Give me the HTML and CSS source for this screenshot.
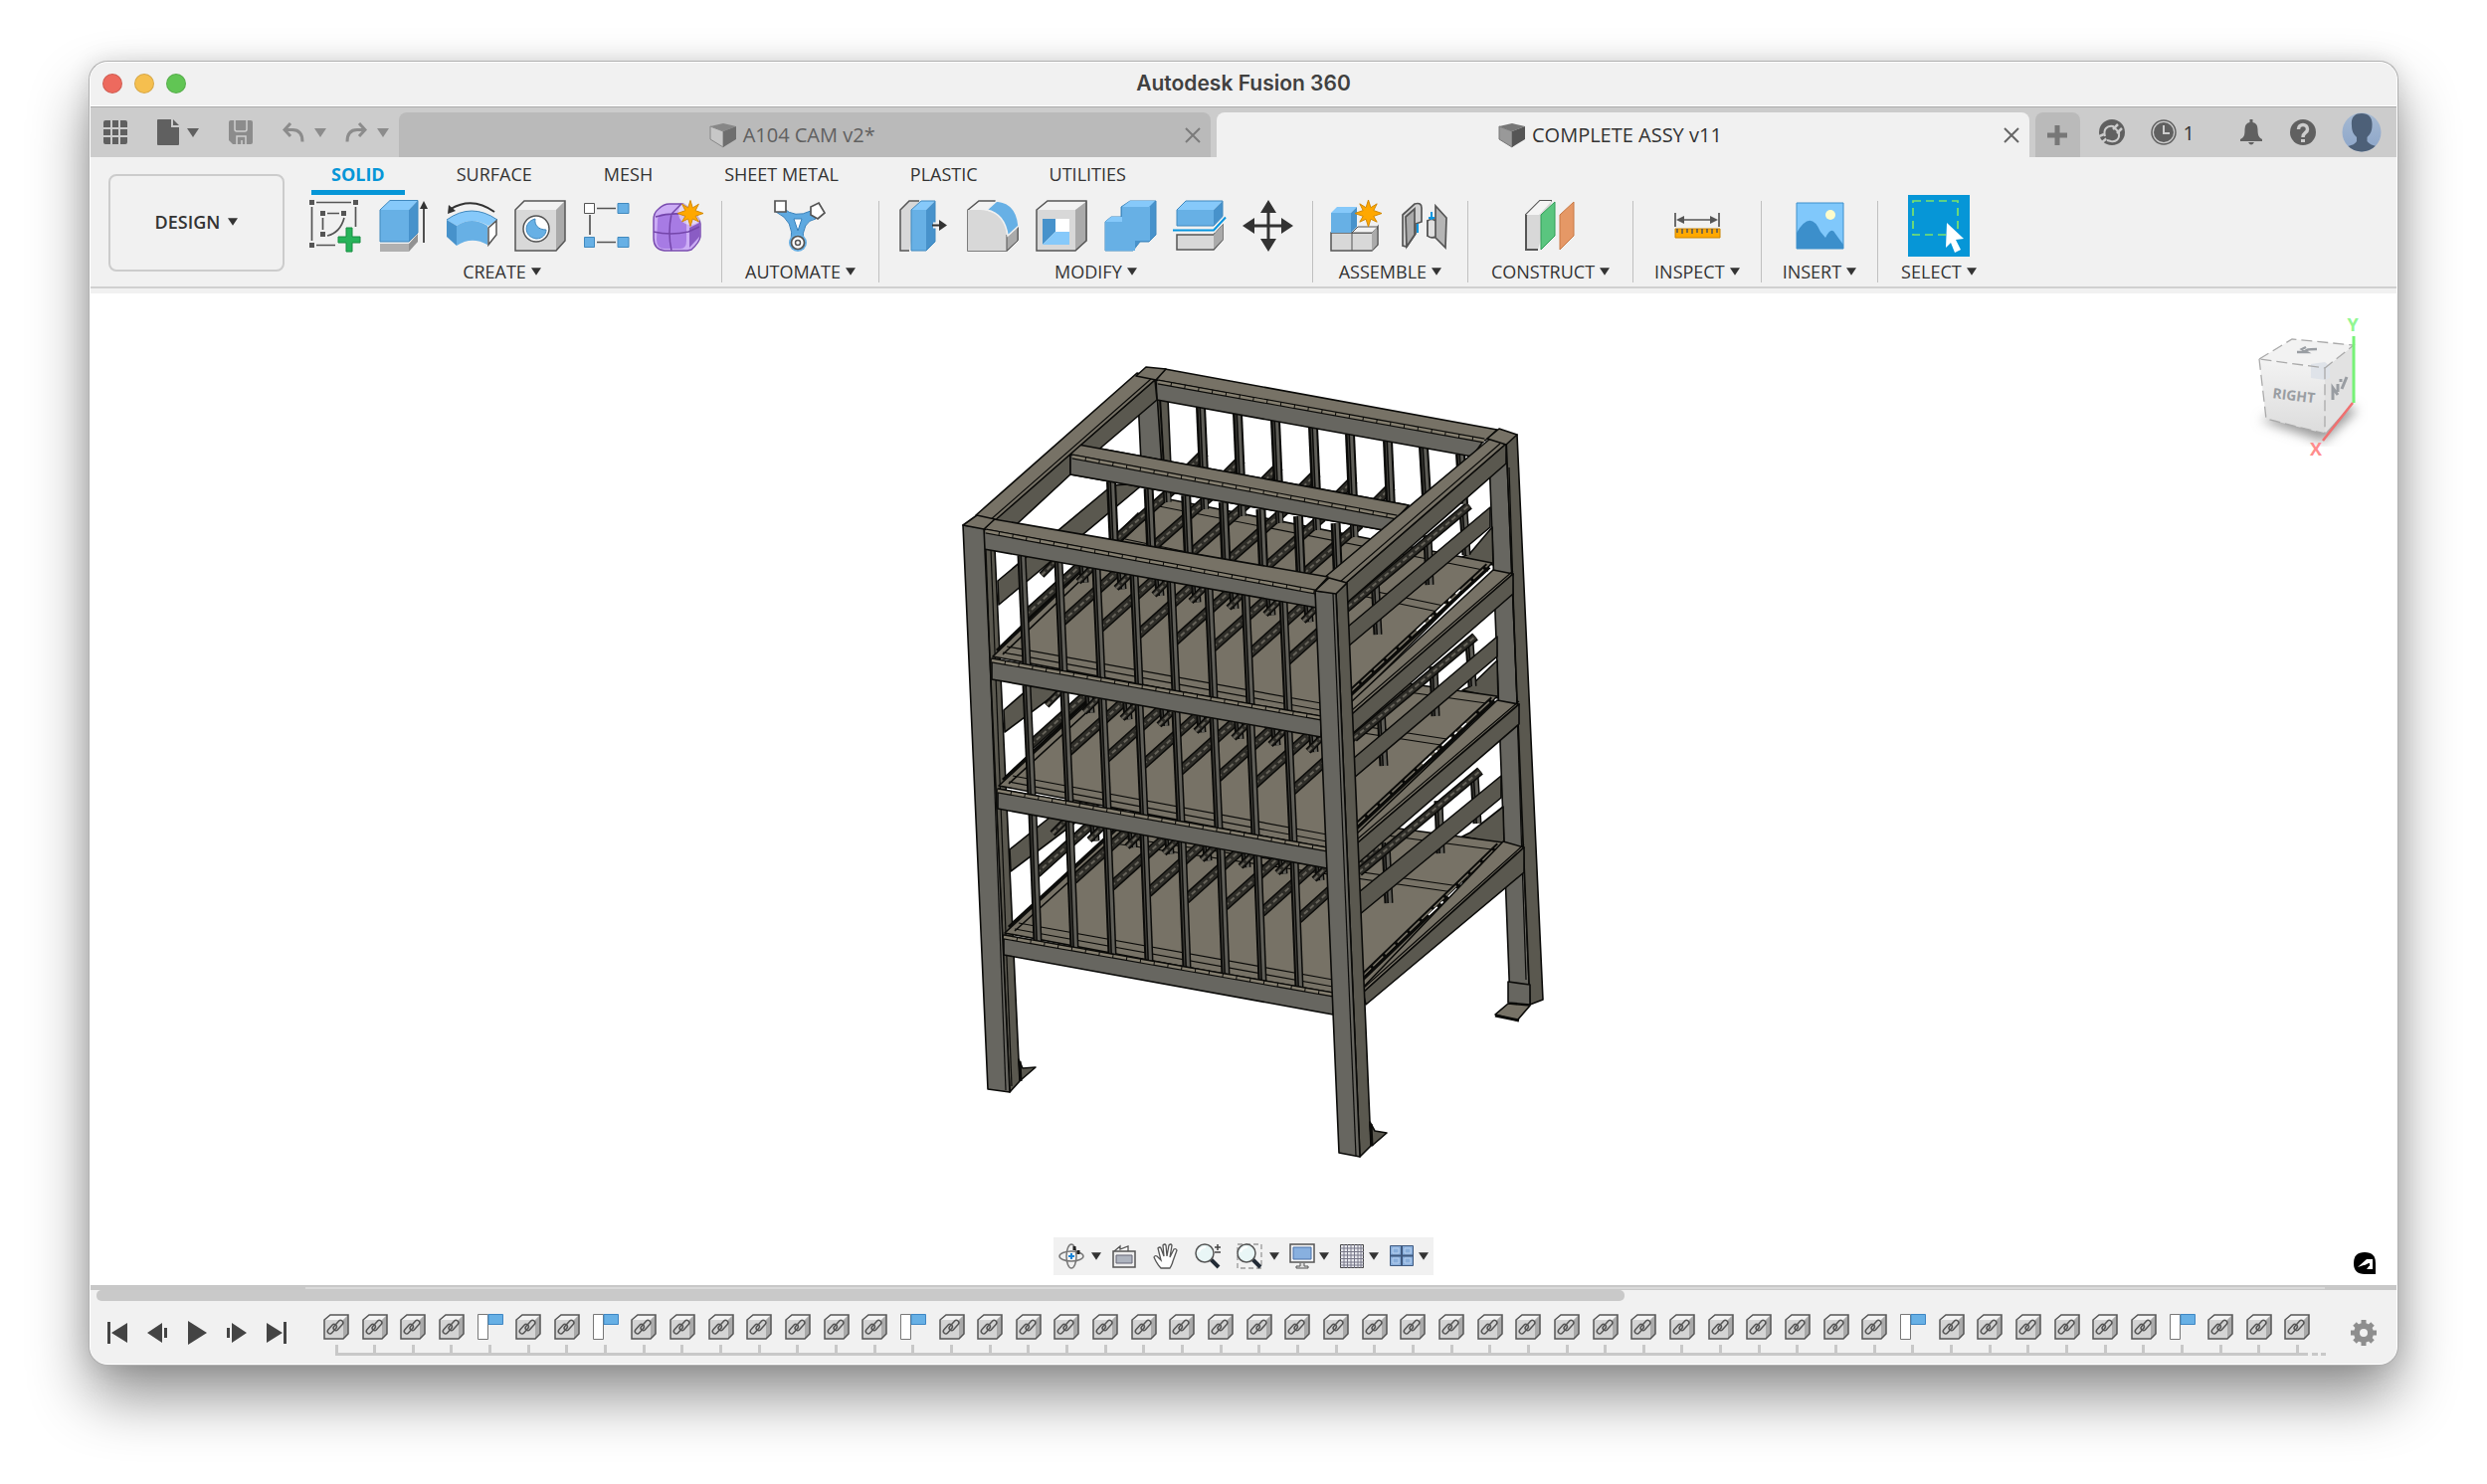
FILE: index.html
```html
<!DOCTYPE html>
<html lang="en">
<head>
<meta charset="utf-8">
<title>Autodesk Fusion 360</title>
<link rel="stylesheet" href="styles.css">
<script src="app.js" defer></script>
</head>
<body>
<svg class="defs" aria-hidden="true">
  <symbol id="caret" viewBox="0 0 12 9"><path d="M0 0h12L6 9z" fill="currentColor"/></symbol>
  <symbol id="star" viewBox="-14 -14 28 28"><path d="M0-14L2.5-6 9-10 5.500-3 14 0 5.500 3 9 9 2.500 6 0 14-2.500 6-9 9-5.500 3-14 0-5.500-3-9-10-2.500-6z" fill="#ffa800" stroke="#d08600"/></symbol>
  <symbol id="doc" viewBox="0 0 28 26"><path d="M1 4L14 1l13 3-13 5z" fill="#777"/><path d="M1 4l13 5v16L1 17z" fill="currentColor" stroke="#777"/><path d="M14 9l13-5v13l-13 8z" fill="#555"/></symbol>
  <symbol id="close" viewBox="0 0 16 16"><path d="M1 1l14 14M15 1L1 15" stroke="#666" stroke-width="2"/></symbol>
  <symbol id="link" viewBox="0 0 26 26"><path d="M1 6l6-5h18v19l-5 5H1z" fill="#d4d4d4"/><path d="M1 6l6-5h18l-5 5z" fill="#f4f4f4"/><path d="M20 6l5-5v19l-5 5z" fill="#aaa"/><path d="M1 6l6-5h18v19l-5 5H1z" fill="none" stroke="#555" stroke-width="1.500"/><g fill="none" stroke="#555" stroke-width="1.500"><rect x="-2.500" y="-6" width="5" height="11" rx="2.500" transform="translate(8.500 15.500) rotate(42)"/><rect x="-2.500" y="-6" width="5" height="12" rx="2.500" transform="translate(15 11.500) rotate(42)"/></g></symbol>
  <symbol id="flag" viewBox="0 0 26 26"><path d="M.5.5h10v25H.5z" fill="#fff" stroke="#777"/><path d="M11 .5h14.500v10H11z" fill="#67b0e5" stroke="#3f87c4"/></symbol>
  <symbol id="lens" viewBox="0 0 26 26"><path d="M16 16l8 8" stroke="#222b36" stroke-width="4"/><circle cx="10" cy="10" r="9" fill="#e9f6f6" stroke="#555" stroke-width="1.500"/><path d="M4 9c1-4 4-5 7-5" stroke="#fff" stroke-width="2" fill="none"/></symbol>
</svg>

<main class="window">
  <header class="titlebar">
    <div class="lights"><button class="light red" aria-label="Close window"></button><button class="light yellow" aria-label="Minimize"></button><button class="light green" aria-label="Zoom window"></button></div>
    <h1>Autodesk Fusion 360</h1>
  </header>

  <div class="appbar">
    <div class="quick">
      <button aria-label="Data panel"><svg width="24" height="24" viewBox="0 0 24 24" fill="#606060"><path d="M0 2q0-2 2-2h5v7H0zM9 0h6v7H9zM17 0h5q2 0 2 2v5h-7zM0 9h7v6H0zM9 9h6v6H9zM17 9h7v6h-7zM0 17h7v7H2q-2 0-2-2zM9 17h6v7H9zM17 17h7v5q0 2-2 2h-5z"/></svg></button>
      <button aria-label="File"><svg width="22" height="26" viewBox="0 0 22 26"><path d="M1 0h13v8h8v17q0 1-1 1H1q-1 0-1-1V1q0-1 1-1zM16 0l6 6h-6z" fill="#606060"/></svg><svg class="c file" width="12" height="9"><use href="#caret"/></svg></button>
      <button aria-label="Save"><svg width="24" height="24" viewBox="0 0 24 24"><path d="M2 0h20q2 0 2 2v20q0 2-2 2H4l-4-4V2q0-2 2-2z" fill="#8c8c8c"/><path d="M6 0v9q0 2 2 2h8q2 0 2-2V0M8 24v-8h9v8M13 24v-4" stroke="#d0d0d0" stroke-width="1.500" fill="none"/></svg></button>
      <div class="history">
        <button aria-label="Undo"><svg width="22" height="20" viewBox="0 0 22 20" fill="none" stroke="#8c8c8c" stroke-width="3"><path d="M8 1L2 7.500 8 14M2 7.500h8q10 0 10 12"/></svg><svg class="c" width="12" height="9"><use href="#caret"/></svg></button>
        <button aria-label="Redo"><svg width="22" height="20" viewBox="0 0 22 20" fill="none" stroke="#8c8c8c" stroke-width="3"><path d="M14 1l6 6.500L14 14M20 7.500h-8q-10 0-10 12"/></svg><svg class="c" width="12" height="9"><use href="#caret"/></svg></button>
      </div>
    </div>
    <div class="docs">
      <div class="doc inactive"><span><svg width="28" height="26"><use href="#doc"/></svg>A104 CAM v2*</span><button aria-label="Close A104 CAM"><svg width="16" height="16"><use href="#close"/></svg></button></div>
      <div class="doc active"><span><svg width="28" height="26"><use href="#doc"/></svg>COMPLETE ASSY v11</span><button aria-label="Close COMPLETE ASSY"><svg width="16" height="16"><use href="#close"/></svg></button></div>
    </div>
    <button class="new" aria-label="New design"><svg width="20" height="20" viewBox="0 0 20 20"><path d="M10 0v20M0 10h20" stroke="#777" stroke-width="5"/></svg></button>
    <div class="account">
      <button aria-label="Extensions"><svg width="26" height="26" viewBox="0 0 26 26"><circle cx="13" cy="13" r="13" fill="#606060"/><path d="M0 17l5-2M3 23l5-4" stroke="#ccc" stroke-width="2.500"/><path d="M6 17c-2-7 2-11 8-10l6 6c1 7-3 10-8 9l-4-1" fill="#606060" stroke="#ccc" stroke-width="2"/><path d="M14 10l5-5M18 14l5-5" stroke="#ccc" stroke-width="2.500"/></svg></button>
      <button class="jobs" aria-label="Job status"><svg width="26" height="26" viewBox="0 0 26 26"><circle cx="13" cy="13" r="12" fill="none" stroke="#606060" stroke-width="1.500"/><circle cx="13" cy="13" r="10" fill="#606060"/><path d="M13 6v8h6" fill="none" stroke="#ccc" stroke-width="2"/></svg>1</button>
      <button class="bell" aria-label="Notifications"><svg width="22" height="26" viewBox="0 0 22 26"><path d="M9.500 3V0h3v3q5 1 5 7c0 6 1 8 4.500 10v2H0v-2c4-2 4.500-4 4.500-10q0-6 5-7zM8 23h6q-3 5-6 0z" fill="#606060"/></svg></button>
      <button aria-label="Help"><svg width="26" height="26" viewBox="0 0 26 26"><circle cx="13" cy="13" r="13" fill="#606060"/><path d="M8.500 10c0-6 9-6 9 0 0 4-4.500 3-4.500 8" fill="none" stroke="#ccc" stroke-width="3.500"/><path d="M11 20h4v3h-4z" fill="#ccc"/></svg></button>
      <button aria-label="Profile"><svg width="40" height="40" viewBox="0 0 40 40"><defs><linearGradient id="av" x2="0" y2="1"><stop stop-color="#a5b9d2"/><stop offset="1" stop-color="#8ca5c9"/></linearGradient><clipPath id="ac"><circle cx="20" cy="20" r="19.500"/></clipPath></defs><circle cx="20" cy="20" r="19.500" fill="url(#av)"/><path clip-path="url(#ac)" d="M20 1c7 0 11 4 10.500 12 0 6-2 9-5 12v4c3 4 7 4 11 6v8H4v-8c4-2 9-2 11-6v-4c-3-3-5-6-5-12C9 5 13 1 20 1z" fill="#4d6078"/></svg></button>
    </div>
  </div>

  <section class="ribbon">
    <button class="workspace">DESIGN<svg width="10" height="8"><use href="#caret"/></svg></button>
    <div class="tools">
      <nav class="tabs"><button class="on">SOLID</button><button>SURFACE</button><button>MESH</button><button>SHEET METAL</button><button>PLASTIC</button><button>UTILITIES</button></nav>
      <div class="groups">
        <div class="group create">
          <div class="icons">
            <button aria-label="Create sketch"><svg viewBox="0 0 52 52"><g fill="#555"><path d="M1 0h5v5H1zM45 0h5v5h-5zM1 43h5v5H1zM12 11h5v5h-5zM33 11h5v5h-5zM12 32h5v5h-5z"/></g><path d="M8 2.500h35M3.500 7v34M47.500 7v20M8 45.500h19M19 13.500h12M14.500 18v12M36 18Q32 33 19 36" stroke="#555" stroke-width="1.700" fill="none"/><path d="M38 28h6v9h8v6h-8v9h-6v-9h-8v-6h8z" fill="#27b35a" stroke="#168d40"/></svg></button>
            <button aria-label="Extrude"><svg viewBox="0 0 52 52"><path d="M3 44h29v8H3z" fill="#b0b0b0"/><path d="M32 44l9-10v8l-9 10z" fill="#929292"/><path d="M3 10h29v32H3z" fill="#67b0e5"/><path d="M3 10l10-9.500h28L32 10z" fill="#86c9fa"/><path d="M32 10l9-9.500V33l-9 9z" fill="#4792cb"/><path d="M3 10l10-9.500h28V33l-9 9H3z" fill="none" stroke="#4189be"/><path d="M47 5v38" stroke="#333" stroke-width="1.700"/><path d="M43 9l4-8 4 8z" fill="#333"/></svg></button>
            <button aria-label="Revolve"><svg viewBox="0 0 52 52"><path d="M49 12Q27-4 5 9" fill="none" stroke="#333" stroke-width="2"/><path d="M2 14l1-9 7 6z" fill="#333"/><path d="M1 20Q26 2 52 20l-9 6Q26 16 11 26z" fill="#86c9fa"/><path d="M11 26q15-10 31 0v19Q26 36 11 46z" fill="#67b0e5"/><path d="M1 20l10 6v20L1 37z" fill="#4792cb"/><path d="M1 20Q26 2 52 20" fill="none" stroke="#4189be"/><path d="M43 28l8-7v14l-8 10z" fill="#fff" stroke="#555" stroke-width="1.500"/></svg></button>
            <button aria-label="Hole"><svg viewBox="0 0 52 52"><path d="M1 10l9-9h41v40L42 51H1z" fill="#d8d8d8"/><path d="M1 10l9-9h41l-9 9z" fill="#f2f2f2"/><path d="M42 10l9-9v40L42 51z" fill="#aaa"/><path d="M1 10l9-9h41v40L42 51H1z" fill="none" stroke="#555" stroke-width="1.500"/><circle cx="22" cy="29" r="13" fill="#fff" stroke="#555" stroke-width="1.500"/><path d="M21 19c-12 3-12 18 1 20 7 0 10-5 10-9-8 0-12-5-11-11z" fill="#67b0e5" stroke="#4189be"/></svg></button>
            <button aria-label="Pattern"><svg viewBox="0 0 52 52"><path d="M14 8.500h19M14 42.500h19M7 15v20" stroke="#555" stroke-width="1.700"/><path d="M1.500 3.500h10v10h-10z" fill="#fff" stroke="#555"/><path d="M35 3.500h11v10H35zM1.500 37.500h10v10h-10zM35 37.500h11v10H35z" fill="#67b0e5" stroke="#4189be"/></svg></button>
            <button aria-label="Create form"><svg viewBox="0 0 52 52"><path d="M2 20Q2 13 7 9q5-5 11-5h14q16 10 17 20v13q-1 6-9 13l-4 1H13Q2 50 2 38z" fill="#ccadf5" stroke="#7a4db0" stroke-width="1.500"/><path d="M6 22q0-8 5-8h18q6 0 6 7v20q0 8-6 8H13q-8 0-8-9z" fill="#a77be4"/><path d="M38 28l10-5v14l-10 11z" fill="#8a5cc4"/><path d="M2 32q17 4 35 0l11-5M20 51q-4-18 0-37L30 4M4 17q16-5 33-2" stroke="#7446aa" stroke-width="1.500" fill="none"/><circle cx="39" cy="13" r="12" fill="#f1f1f1" opacity=".6"/><use href="#star" x="26" y="0" width="26" height="27"/></svg></button>
          </div>
          <button class="label">CREATE<svg width="10" height="8"><use href="#caret"/></svg></button>
        </div>
        <span class="sep"></span>
        <div class="group">
          <div class="icons"><button aria-label="Automate"><svg viewBox="0 0 52 52"><path d="M9 8q12 11 28 3l5 8q-14 2-13 24l-12-1Q21 21 2 12z" fill="#5ea9e0" stroke="#3881bb"/><path d="M20 19h8l-4 12z" fill="#fff" stroke="#3881bb"/><path d="M1 1h11v11H1z" fill="#fff" stroke="#555" stroke-width="1.700"/><path d="M45 3l6 10-7 6-7-4V7z" fill="#fff" stroke="#555" stroke-width="1.700"/><circle cx="24" cy="43" r="9" fill="#67b0e5"/><circle cx="24" cy="43" r="6.500" fill="#fff" stroke="#555" stroke-width="1.700"/><circle cx="24" cy="43" r="2.500" fill="none" stroke="#555" stroke-width="1.500"/></svg></button></div>
          <button class="label">AUTOMATE<svg width="10" height="8"><use href="#caret"/></svg></button>
        </div>
        <span class="sep"></span>
        <div class="group">
          <div class="icons">
            <button aria-label="Press pull"><svg viewBox="0 0 52 52"><path d="M11 51H2V10l9-9h10" fill="#d8d8d8" stroke="#555" stroke-width="1.500"/><path d="M13 10h15v41H13z" fill="#67b0e5"/><path d="M13 10l10-9h14l-9 9z" fill="#86c9fa"/><path d="M28 10l9-9v41l-9 9z" fill="#4792cb"/><path d="M13 10l10-9h14v41l-9 9H13z" fill="none" stroke="#4189be"/><path d="M35 25.500h10" stroke="#f1f1f1" stroke-width="6"/><path d="M34 25.500h9" stroke="#333" stroke-width="2"/><path d="M41 20l8 5.500-8 5.500z" fill="#333"/></svg></button>
            <button aria-label="Fillet"><svg viewBox="0 0 52 52"><path d="M1 10l11-9h16l23 26v13L40 51H1z" fill="#f2f2f2" stroke="#555" stroke-width="1.500"/><path d="M1 10h13q26 2 26 27v14H1z" fill="#d8d8d8"/><path d="M40 35l11-10v16L40 51z" fill="#aaa" stroke="#555"/><path d="M20 10l10-9q20 2 22 25L41 36Q38 14 20 10z" fill="#67b0e5" stroke="#f1f1f1" stroke-width="1.500"/></svg></button>
            <button aria-label="Shell"><svg viewBox="0 0 52 52"><path d="M1 10l11-9h40v40L40 51H1z" fill="#d8d8d8"/><path d="M1 10l11-9h40l-12 9z" fill="#f2f2f2"/><path d="M40 10L52 1v40L40 51z" fill="#aaa"/><path d="M1 10l11-9h39v40L40 51H1z" fill="none" stroke="#555" stroke-width="1.500"/><path d="M7 19h27v26H7z" fill="#fff"/><path d="M7 19h13v13L7 45z" fill="#4792cb"/><path d="M20 32h14v13H7z" fill="#86c9fa"/></svg></button>
            <button aria-label="Combine"><svg viewBox="0 0 52 52"><path d="M1 22l6-5h10V7l9-6h26v34l-7 7h-9l-7 9H1z" fill="#4792cb" stroke="#4189be"/><path d="M1 22h17V7h28v34H31v10H1z" fill="#67b0e5"/><path d="M18 7l8-6h25l-6 6zM1 22l6-5h11v5z" fill="#86c9fa"/></svg></button>
            <button aria-label="Split body"><svg viewBox="0 0 52 52"><path d="M4 10h37v16H4z" fill="#67b0e5"/><path d="M4 10l9-9h37l-9 9z" fill="#86c9fa"/><path d="M41 10l9-9v17l-9 8z" fill="#4792cb"/><path d="M4 10l9-9h37v17l-9 8H4z" fill="none" stroke="#4189be"/><path d="M4 35h37l9-10v15l-9 10H4z" fill="#d8d8d8" stroke="#555" stroke-width="1.500"/><path d="M41 35l9-10v15l-9 9z" fill="#aaa"/><path d="M0 30.500h41l12-13" fill="none" stroke="#f1f1f1" stroke-width="5"/><path d="M0 30.500h41l12-13" fill="none" stroke="#0696e0" stroke-width="2"/></svg></button>
            <button aria-label="Move"><svg viewBox="0 0 52 52"><path d="M27 8v36M8 26h38" stroke="#333" stroke-width="3"/><path d="M27 0l8 13H19zM27 52l8-13H19zM1 26l12-8v16zM52 26l-12-8v16z" fill="#333"/></svg></button>
          </div>
          <button class="label">MODIFY<svg width="10" height="8"><use href="#caret"/></svg></button>
        </div>
        <span class="sep"></span>
        <div class="group tight">
          <div class="icons">
            <button aria-label="New component"><svg viewBox="0 0 52 52"><path d="M1 33h43l4-6v18l-6 6H1z" fill="#d8d8d8" stroke="#555" stroke-width="1.500"/><path d="M22 33l6-6h20l-6 6zv18" fill="#f2f2f2" stroke="#555"/><path d="M42 33l5-6v18l-5 6z" fill="#aaa"/><path d="M1 13h20v20H1z" fill="#67b0e5"/><path d="M1 13l6-6h20l-6 6z" fill="#86c9fa"/><path d="M21 13l6-6v20l-6 6z" fill="#4792cb"/><circle cx="38" cy="13" r="11" fill="#f1f1f1"/><use href="#star" x="25" y="0" width="27" height="27"/></svg></button>
            <button aria-label="Joint"><svg viewBox="0 0 52 52"><g stroke="#555" stroke-width="1.700"><path d="M4 15l12-11q7-2 7 4v14l-6 2v10L8 47l-4-1z" fill="#d0d0d0"/><path d="M7 17l9-8v26L8 47z" fill="#aaa"/><path d="M48 18L37 6v14l-8 1v15l8 2 10 10z" fill="#b5b5b5"/><path d="M29 21q4-3 8 0v16q-5 2-8-1z" fill="#e0e0e0"/></g><path d="M19 24v9M33 12v8M30 18h6" stroke="#0696e0" stroke-width="2"/></svg></button>
          </div>
          <button class="label">ASSEMBLE<svg width="10" height="8"><use href="#caret"/></svg></button>
        </div>
        <span class="sep"></span>
        <div class="group">
          <div class="icons"><button aria-label="Offset plane"><svg viewBox="0 0 52 52"><path d="M14 50H2V15L16 1h12" fill="#d8d8d8" stroke="#555" stroke-width="2"/><path d="M2 15L16 1h12L15 15z" fill="#f4f4f4"/><path d="M17 15L31 2v34L17 50z" fill="#5ac57f" stroke="#2f9e57"/><path d="M36 15L50 2v34L36 50z" fill="#e59866" stroke="#c77845"/></svg></button></div>
          <button class="label">CONSTRUCT<svg width="10" height="8"><use href="#caret"/></svg></button>
        </div>
        <span class="sep"></span>
        <div class="group tight">
          <div class="icons"><button aria-label="Measure"><svg viewBox="0 0 52 52"><path d="M4 13v14M48 13v14M7 20h38" stroke="#555" stroke-width="1.700"/><path d="M5 20l8-4v8zM47 20l-8-4v8z" fill="#555"/><path d="M4 29h45v9H4z" fill="#ffa800" stroke="#c98400"/><path d="M6 29v4m5-4v5m5-5v4m5-4v5m5-5v4m5-4v5m5-5v4m5-4v5m5-5v4" stroke="#555" stroke-width="1.500"/></svg></button></div>
          <button class="label">INSPECT<svg width="10" height="8"><use href="#caret"/></svg></button>
        </div>
        <span class="sep"></span>
        <div class="group tight">
          <div class="icons"><button aria-label="Insert decal"><svg viewBox="0 0 52 52"><path d="M3 3h47v46H3z" fill="#80c8fb"/><path d="M3 33q14-24 24-1l5 6q6-12 10-4l8 11v4H3z" fill="#3c8fcb"/><circle cx="37" cy="15" r="5" fill="#fdfccb"/><path d="M3 3h47v46H3z" fill="none" stroke="#3c8fcb"/></svg></button></div>
          <button class="label">INSERT<svg width="10" height="8"><use href="#caret"/></svg></button>
        </div>
        <span class="sep"></span>
        <div class="group">
          <div class="icons"><button class="selected" aria-label="Select"><svg viewBox="0 0 62 62"><rect x="5" y="6" width="45" height="34" fill="none" stroke="#7de36a" stroke-width="1.700" stroke-dasharray="8 5"/><path d="M39 28l17 16-8 1 5 10-6 3-4-10-5 5z" fill="#fff"/></svg></button></div>
          <button class="label">SELECT<svg width="10" height="8"><use href="#caret"/></svg></button>
        </div>
      </div>
    </div>
  </section>

  <section class="canvas">
    <svg id="rack" class="rack" viewBox="940 360 620 820" width="620" height="820" role="img" aria-label="Steel rack assembly"></svg>
    <svg class="cube" viewBox="2255 310 125 160" width="125" height="160" role="img" aria-label="View cube">
      <defs><filter id="soft"><feGaussianBlur stdDeviation="6"/></filter><linearGradient id="cf" x2="0" y2="1"><stop stop-color="#f3f3f3"/><stop offset="1" stop-color="#dcdcdc"/></linearGradient></defs>
      <path d="M2272 422l64 22 34-32-30-10z" fill="#999" filter="url(#soft)"/>
      <path d="M2271 361l66 9v66l-59-15z" fill="url(#cf)"/><path d="M2337 370l29-23-1 58-28 31z" fill="#e2e2e2"/><path d="M2271 361l33-20 62 6-29 23z" fill="#f2f2f2"/>
      <path d="M2323 366l14-2 5 4v12l-5 2-14-2z" fill="#dfe3e9"/>
      <path d="M2271 361l33-20 62 6-29 23zM2271 361l7 60 59 15v-66" fill="none" stroke="#aaa" stroke-width="1.300" stroke-dasharray="11 5"/>
      <path d="M2309 354h10l-5-3 4-2M2317 355c0-4 4-4 12-4" stroke="#999da2" stroke-width="2.500" fill="none"/>
      <path d="M2345 402v-12l5 7M2350 386v8M2353 381v3M2354 391l5-12" stroke="#999da2" stroke-width="3" fill="none"/>
      <text class="face" x="2284" y="400" transform="rotate(7 2284 400)">RIGHT</text>
      <path d="M2366 338v67" stroke="#77f277" stroke-width="3"/><path d="M2365 405l-30 38" stroke="#f07070" stroke-width="2.500"/>
      <text class="axis y" x="2365" y="333">Y</text><text class="axis x" x="2328" y="458">X</text>
    </svg>
    <div class="navbar">
      <button class="wide" aria-label="Orbit"><svg width="26" height="26" viewBox="0 0 26 26" fill="none" stroke="#777" stroke-width="1.500"><ellipse cx="13" cy="13" rx="5" ry="12"/><ellipse cx="13" cy="13" rx="12" ry="5"/><path d="M13 10v6M10 13h6" stroke="#1683d8" stroke-width="2"/><path d="M16 3v4M20 7v4" stroke="#222" stroke-width="3"/></svg><svg width="10" height="8"><use href="#caret"/></svg></button>
      <button class="plain" aria-label="Look at"><svg width="26" height="26" viewBox="0 0 26 26"><path d="M3 8l6-5v3l8-3v5" fill="#fff" stroke="#555" stroke-width="1.300"/><path d="M2 8h22v16H2z" fill="#eee" stroke="#555" stroke-width="1.500"/><path d="M5 12h16v8H5z" fill="#aeb4bf" stroke="#667"/></svg></button>
      <button class="plain" aria-label="Pan"><svg width="26" height="26" viewBox="0 0 26 26"><path d="M8 25Q4 21 1 14q1-2 3-1l4 4L5 5q2-2 3 0l3 8-1-11q2-2 3 0l1 11 2-11q2-2 3 0l-2 12 4-8q2-1 3 1l-4 11q-1 4-3 7z" fill="#fff" stroke="#555" stroke-width="1.300"/></svg></button>
      <button class="plain" aria-label="Zoom"><svg width="26" height="26"><use href="#lens"/><path d="M20 4h6M23 1v6M20 9h6" stroke="#444" stroke-width="1.500"/></svg></button>
      <button class="wide" aria-label="Fit"><svg width="26" height="26"><path d="M1 1h24v24H1z" fill="none" stroke="#999" stroke-width="1.300" stroke-dasharray="5 3"/><use href="#lens"/></svg><svg width="10" height="8"><use href="#caret"/></svg></button>
      <button aria-label="Display settings"><svg width="26" height="26" viewBox="0 0 26 26"><path d="M1 1h24v18H1z" fill="#f5f5f5" stroke="#555" stroke-width="1.500"/><path d="M4 4h18v12H4z" fill="#88b0df" stroke="#4b73ab"/><path d="M11 20v3H7v2h12v-2h-4v-3" fill="#ddd" stroke="#555"/></svg><svg width="10" height="8"><use href="#caret"/></svg></button>
      <button aria-label="Grid and snaps"><svg width="26" height="26" viewBox="0 0 26 26"><path d="M1.500 1.500h23v23h-23z" fill="#e8e9ee" stroke="#444"/><path d="M5 1v24m3.500-24v24M12 1v24m3.500-24v24M19 1v24m3-24v24M1 5h24M1 8.500h24M1 12h24M1 15.500h24M1 19h24M1 22h24" stroke="#778"/></svg><svg width="10" height="8"><use href="#caret"/></svg></button>
      <button aria-label="Viewports"><svg width="26" height="26" viewBox="0 0 26 26"><path d="M1.500 2.500h23v20h-23z" fill="#88aedb" stroke="#405a80"/><path d="M13 2v21M1 12.500h24" stroke="#405a80" stroke-width="2"/><path d="M4 5h6v5H4zM16 5h6v5h-6zM4 15h6v5H4zM16 15h6v5h-6z" fill="none" stroke="#b7d0ef"/></svg><svg width="10" height="8"><use href="#caret"/></svg></button>
    </div>
    <svg class="badge" width="22" height="22" viewBox="0 0 22 22"><path d="M11 0q11 0 11 11v11H11Q0 22 0 11T11 0z"/><path d="M4 15l9-8h6v10h-6l3-4H10z" fill="#fff"/><path d="M11 13l4-2h1v3h-2z"/></svg>
  </section>

  <footer class="timeline">
    <div class="edge"></div>
    <div class="scroll"><div class="thumb"></div></div>
    <div class="row">
      <div class="player">
        <button aria-label="To start"><svg width="20" height="24" viewBox="0 0 20 24"><path d="M0 1h3v22H0zM4 12L20 2v20z"/></svg></button>
        <button aria-label="Step back"><svg width="20" height="24" viewBox="0 0 20 24"><path d="M0 12L15 2v20zM17 7h3v10h-3z"/></svg></button>
        <button aria-label="Play"><svg width="20" height="24" viewBox="0 0 20 24"><path d="M1 0l19 12L1 24z"/></svg></button>
        <button aria-label="Step forward"><svg width="20" height="24" viewBox="0 0 20 24"><path d="M0 7h3v10H0zM5 2l15 10L5 22z"/></svg></button>
        <button aria-label="To end"><svg width="20" height="24" viewBox="0 0 20 24"><path d="M0 2l16 10L0 22zM17 1h3v22h-3z"/></svg></button>
      </div>
      <div class="track"><ol id="features"></ol></div>
      <button class="gear" aria-label="Timeline settings"><svg width="26" height="26" viewBox="-13 -13 26 26"><circle r="7" fill="none" stroke="#8e8e8e" stroke-width="6"/><g stroke="#8e8e8e" stroke-width="5"><path d="M0-13v5M0 8v5M-13 0h5M8 0h5M-9-9l3 3M6 6l3 3M-9 9l3-3M6-6l3-3"/></g></svg></button>
    </div>
  </footer>
</main>
</body>
</html>
```
FILE: styles.css
```css
* { box-sizing: border-box; }
body { margin: 0; min-height: 100vh; padding: 62px 90px 120px; display: flex; background: #fff; color: #333; font-family: "Open Sans", "Noto Sans", sans-serif; font-size: 18px; }
button { margin: 0; padding: 0; border: 0; background: none; color: inherit; font: inherit; display: flex; align-items: center; justify-content: center; flex: none; }
svg { display: block; flex: none; }
.defs { position: absolute; width: 0; height: 0; }
.window { flex: 1; min-width: 0; display: flex; flex-direction: column; overflow: hidden; border-radius: 18px; background: #f1f1f1; border: 1px solid #fff; box-shadow: 0 0 0 1px #b0b0b0, 0 32px 60px rgba(0,0,0,.44), 0 0 24px rgba(0,0,0,.12); }

.titlebar { height: 44px; flex: none; display: grid; grid-template-columns: 1fr auto 1fr; align-items: center; padding-bottom: 2px; border-bottom: 1px solid #fff; }
.lights { display: flex; gap: 12px; padding-left: 12px; }
.light { width: 20px; height: 20px; border-radius: 50%; border: 1px solid rgba(0,0,0,.12); }
.red { background: #ed6a5e; }
.yellow { background: #f5bf4f; }
.green { background: #61c554; }
h1 { margin: 0; font: 600 21px Inter, sans-serif; color: #404040; }

.appbar { height: 51px; flex: none; display: flex; align-items: flex-end; background: #ccc; border-top: 1px solid #aaa; }
.quick { height: 50px; display: flex; align-items: center; gap: 30px; padding: 0 10px 0 13px; }
.quick button { gap: 10px; }
.history { display: flex; gap: 19px; }
.c { color: #8c8c8c; }
.c.file { color: #606060; margin-left: -2px; }
.docs { flex: 1; display: flex; gap: 6px; }
.doc { flex: 1; height: 45px; display: flex; align-items: center; padding-right: 10px; border-radius: 8px 8px 0 0; font-size: 20px; }
.doc span { flex: 1; display: flex; align-items: center; justify-content: center; gap: 6px; }
.inactive { background: #bababa; color: #606060; }
.inactive use { color: #ccc; }
.inactive svg { opacity: .75; }
.active { background: #f1f1f1; color: #333; }
.active use { color: #999; }
.new { width: 45px; height: 45px; margin-left: 6px; border-radius: 8px 8px 0 0; background: #bababa; }
.account { height: 50px; display: flex; align-items: center; gap: 26px; padding: 0 15px 0 19px; }
.jobs { gap: 7px; margin-right: 18px; font-size: 20px; }
.bell { width: 26px; }

.ribbon { flex: none; display: flex; align-items: flex-start; height: 132px; border-bottom: 2px solid #d0d0d0; }
.workspace { width: 177px; height: 98px; margin: 17px 0 0 18px; padding-bottom: 2px; gap: 8px; border: 2px solid #ccc; border-radius: 8px; font-weight: 600; }
.tabs { display: flex; gap: 32px; height: 38px; padding-left: 27px; }
.tabs button { padding: 0 20px; border-bottom: 5px solid transparent; }
.tabs .on { color: #0696d7; font-weight: 700; border-color: #0696d7; }
.groups { display: flex; align-items: center; height: 93px; }
.sep { width: 1px; height: 82px; background: #c0c0c0; }
.group { padding: 0 19px; display: flex; flex-direction: column; align-items: center; }
.group.create { padding: 0 18px 0 24px; }
.group.tight { padding: 0 17px; }
.create .label { margin-right: 8px; }
.icons { height: 62px; display: flex; align-items: center; gap: 17px; }
.icons svg { width: 52px; height: 52px; overflow: visible; }
.icons .selected, .icons .selected svg { width: 62px; height: 62px; }
.selected { background: #0696d7; }
.label { height: 31px; gap: 5px; padding: 0 4px 2px; }

.canvas { flex: 1; position: relative; margin-top: 5px; padding-top: 65px; background: #fff; }
.rack { margin: 0 auto; }
.cube { position: absolute; right: 29px; top: 15px; }
.face { font: 700 14px "Open Sans", sans-serif; fill: #999da2; }
.axis { font: 700 18px "Open Sans", sans-serif; text-anchor: middle; }
.axis.y { fill: #92f792; }
.axis.x { fill: #ff8c8c; }
.navbar { position: absolute; left: 50%; bottom: 10px; transform: translateX(-50%); height: 38px; display: flex; align-items: center; gap: 10px; padding: 0 5px; background: #f1f1f1; }
.navbar button { gap: 4px; }
.navbar .wide { gap: 7px; }
.navbar .plain { margin-right: 6px; }
.badge { position: absolute; right: 21px; bottom: 11px; }

.timeline { flex: none; }
.edge { height: 5px; background: #c8c8c8; }
.edge::after { content: ""; display: block; height: 2px; margin: 0 72px 0 216px; background: #dadada; transform: translateY(2px); }
.scroll { height: 11px; padding: 0 6px; }
.thumb { width: 66.600%; height: 11px; border-radius: 5px; background: #c9c9c9; }
.row { display: flex; height: 63px; padding: 0 20px 0 17px; }
.player { display: flex; gap: 20px; align-self: flex-start; padding-top: 20px; fill: #444; }
.track { flex: 1; margin: 13px 40px 0 37px; position: relative; }
.track::before { content: ""; position: absolute; left: 12px; right: 3px; top: 39px; height: 3px; background: #c8c8c8; }
.track::after { content: ""; position: absolute; right: -15px; width: 14px; top: 39px; height: 3px; background: linear-gradient(90deg, #c8c8c8 6px, #f1f1f1 6px 9px, #c8c8c8 9px); }
ol { display: flex; justify-content: space-between; margin: 0; padding: 0; list-style: none; }
li { display: flex; flex-direction: column; align-items: center; gap: 5px; }
li::after { content: ""; width: 3px; height: 8px; background: #c8c8c8; }
.gear { height: 26px; margin-top: 19px; }
```
FILE: app.js
```js
// Timeline features: linked components with a few flagged position captures.
const flags = [4, 7, 15, 41, 48];
document.getElementById("features").innerHTML = Array.from({ length: 52 }, (_, i) =>
  `<li><svg width="26" height="26"><use href="#${flags.includes(i) ? "flag" : "link"}"/></svg></li>`).join("");

// Rack assembly, painted back to front.
const GREY = "#676660", TAN = "#777266", DARK = "#5a584f", INK = "#0b0b09";
let out = "";
const poly = (fill, ...p) => { out += `<polygon points="${p.join(" ")}" fill="${fill}" stroke="${INK}" stroke-width="1.6" stroke-linejoin="round"/>`; };
const line = (x1, y1, x2, y2, w = 1.2, c = INK, dash = "") => { out += `<line x1="${x1}" y1="${y1}" x2="${x2}" y2="${y2}" stroke="${c}" stroke-width="${w}" stroke-dasharray="${dash}"/>`; };
const bar = (x1, y1, x2, y2, w = 9) => {
  line(x1, y1, x2, y2, w);
  line(x1 + 1.5, y1, x2 + 1.5, y2, 3, "#5f5e58");
  line(x1 - 2, y1, x2 - 2, y2, 1, "#45443f");
};
const ladder = (x1, y1, x2, y2, w = 9) => {
  line(x1, y1, x2, y2, w);
  line(x1, y1, x2, y2, w - 3, "#2e2d28");
  line(x1, y1, x2, y2, 2, "#66635a", "5 3");
};
const seam = (x1, y1, x2, y2) => { line(x1, y1, x2, y2, 5); line(x1, y1, x2, y2, 2.6, "#857f70", "13 1"); };

// Back posts
poly(GREY, [1144, 400], [1163, 395], [1172, 470], [1147, 465]);
poly(DARK, [1163, 395], [1174, 400], [1177, 470], [1168, 470]);
line(1166, 400, 1170, 470, 2);
poly(GREY, [1497, 460], [1514, 440], [1538, 1010], [1518, 1008]);
poly(DARK, [1514, 440], [1525, 437], [1551, 1005], [1538, 1010]);
line(1517, 470, 1534, 985);
poly(GREY, [1516, 987], [1538, 990], [1538, 1010], [1516, 1008]);
poly(TAN, [1516, 1009], [1538, 1011], [1525, 1026], [1503, 1020]);
line(1503, 1021, 1527, 1026, 3);

// Inner face of the front left post, behind the shelf rails
poly(DARK, [989, 550], [1000, 552], [1025, 1087], [1015, 1098]);
line(996, 552, 1017, 1092);

const levels = [
  { y: [940, 960, 998, 1020], x: [1009, 1340], bars: [1038, 1075, 1113, 1150, 1188, 1227, 1264, 1301], top: 813,
    floor: [[1010, 938], [1160, 800], [1511, 847], [1370, 994], [1340, 1000]], side: [[1370, 993], [1511, 846], [1532, 852], [1370, 998], [1373, 1010], [1532, 877]],
    cross: [[1366, 897], [1509, 780], [1509, 802], [1366, 920]], left: [[1015, 854], [1080, 802], [1110, 805], [1016, 876]] },
  { y: [793, 813, 852, 873], x: [1003, 1334], bars: [1032, 1070, 1108, 1145, 1182, 1220, 1257, 1295], top: 684,
    floor: [[1004, 790], [1155, 650], [1505, 700], [1364, 842], [1334, 853]], side: [[1364, 838], [1505, 704], [1527, 708], [1364, 848], [1365, 868], [1527, 728]],
    cross: [[1361, 762], [1505, 640], [1505, 660], [1361, 782]], left: [[1009, 714], [1055, 674], [1085, 680], [1010, 736]] },
  { y: [662, 683, 720, 741], x: [997, 1328], bars: [1027, 1064, 1102, 1140, 1177, 1215, 1252, 1290], top: 553,
    floor: [[998, 660], [1165, 500], [1500, 566], [1358, 708], [1328, 722]], side: [[1358, 706], [1501, 573], [1521, 577], [1359, 718], [1359, 738], [1521, 597]],
    cross: [[1355, 630], [1498, 510], [1498, 530], [1355, 650]], left: [[1003, 584], [1118, 488], [1150, 486], [1004, 608]] }
];

levels.forEach(L => {
  const [a, b, c, d] = L.floor;
  poly(DARK, ...L.left);
  poly(DARK, [1478, c[1] - 10], [c[0], c[1] - 36], [c[0] + 1, c[1] + 2], [1470, c[1] - 6]);
  poly(TAN, ...L.floor);
  // plate joints along the floor
  line(a[0] + 14, a[1] - 10, L.x[1], L.y[2] - 13);
  line(a[0] + 10, a[1] - 4, L.x[1], L.y[2] - 6);
  line(b[0] - 40, b[1] + 48, c[0] - 50, c[1] + 50);
  line(b[0] - 34, b[1] + 42, c[0] - 44, c[1] + 44);
  line(b[0], b[1] + 9, c[0] - 4, c[1] + 8);
  line(a[0] + 4, a[1] - 6, b[0] - 20, b[1] + 16, 3);
  line(a[0] + 10, a[1] - 2, b[0] - 10, b[1] + 18, 1.6);
  // side channel
  line(d[0] - 2, d[1] - 10, c[0] - 4, c[1] + 3, 7);
  line(d[0] - 2, d[1] - 11, c[0] - 4, c[1] + 2, 1.6, "#777266", "14 3");
  line(d[0] + 66, d[1] - 74, d[0] + 110, d[1] - 115, 1.6, "#fff", "12 5 3 7");
  // rear uprights and rungs
  L.bars.forEach((x, i) => {
    const y = L.top + (x - L.x[0]) * .175;
    if (i > 0) bar(x + 24, y - 6, x + 26, y + 21, 9);
    ladder(x + 4, y + 60, x + 84, y - 12, 10);
    ladder(x + 20, y + 20, x + 58, y - 18, 7);
  });
  // right bay uprights and bracing
  const [p, , , q] = L.cross;
  bar(q[0] + 27, p[1] - 50, q[0] + 30, q[1] - 12, 9);
  bar(q[0] + 80, p[1] - 92, q[0] + 82, q[1] - 62, 9);
  bar(q[0] + 116, p[1] - 118, q[0] + 119, q[1] - 92, 9);
  ladder(p[0], p[1] - 20, p[0] + 122, p[1] - 122, 9);
  poly(DARK, ...L.cross);
  // front uprights
  L.bars.forEach(x => bar(x, L.top + (x - L.x[0]) * .175, x + 5, L.y[0] + 2 + (x - L.x[0]) * .175));
  // front rail
  const [y0, y1, y2, y3] = L.y, [x0, x1] = L.x;
  poly(GREY, [x0, y0], [x1, y2], [x1, y3], [x0, y1]);
  seam(x0, y0 + 2, x1, y2 + 2);
  // side rail
  const s = L.side;
  poly(TAN, s[0], s[1], s[2], s[3]);
  poly(DARK, s[3], s[2], s[5], s[4]);
  line(s[3][0], s[3][1] - 4, s[2][0], s[2][1] - 3);
});

// Uprights seen through the open top
for (let i = 0; i < 7; i++) {
  const x = 1117 + i * 37.6, y = 484 + i * 7;
  ladder(x - 6, y + 68, x + 62, y + 8, 10);
  if (i > 0) bar(x + 18, y - 6, x + 19, y + 14, 8);
  bar(x, y, x + 3, y + 68, 10);
}
[1207, 1244, 1282, 1320, 1357, 1395, 1431, 1468].forEach((x, i) => {
  const y = 409 + i * 6.8, h = i < 6 ? 68 : 50;
  if (i < 6) ladder(x - 16, y + 66, x + 4, y + 46, 10);
  bar(x, y, x + 3, y + h, 10);
});

// Top frame
poly(GREY, [1162, 382], [1492, 442], [1480, 459], [1163, 402]);
poly(TAN, [1171, 371], [1505, 432], [1493, 443], [1162, 382]);
seam(1164, 384, 1492, 443);
poly(GREY, [1076, 457], [1406, 520], [1391, 533], [1076, 477]);
poly(TAN, [1084, 447], [1416, 508], [1405, 520], [1076, 457]);
poly(DARK, [997, 525], [1161, 382], [1163, 402], [1088, 466], [1076, 457], [1076, 477], [1022, 527], [1018, 532]);
poly(GREY, [1076, 457], [1406, 520], [1391, 533], [1076, 477]);
poly(TAN, [1084, 447], [1416, 508], [1405, 520], [1076, 457]);
seam(1078, 459, 1404, 520);
poly(TAN, [981, 518], [1143, 375], [1162, 381], [997, 526]);
line(994, 524, 1157, 381);
poly(DARK, [1353, 586], [1514, 446], [1514, 466], [1354, 606]);
poly(TAN, [1331, 581], [1498, 441], [1514, 446], [1353, 586]);
line(1347, 585, 1508, 446);
poly(GREY, [989, 532], [1322, 594], [1324, 611], [989, 552]);
poly(TAN, [999, 522], [1335, 580], [1322, 594], [989, 532]);
seam(991, 534, 1322, 595);

// Front posts and corner caps
poly(GREY, [968, 528], [989, 531], [1015, 1098], [993, 1095]);
line(991, 552, 1011, 1096);
poly(DARK, [1343, 596], [1354, 586], [1378, 1152], [1367, 1163]);
poly(GREY, [1322, 594], [1343, 596], [1367, 1163], [1346, 1159]);
line(1340, 597, 1363, 1162);
poly(TAN, [968, 528], [982, 518], [1000, 522], [989, 532]);
poly(TAN, [1322, 594], [1336, 581], [1354, 586], [1343, 597]);
poly(TAN, [1142, 378], [1152, 369], [1172, 371], [1162, 382]);
poly(TAN, [1495, 441], [1507, 431], [1525, 437], [1514, 447]);

// Feet
poly(DARK, [1024, 1065], [1028, 1074], [1041, 1073], [1026, 1086]);
line(1025, 1067, 1026, 1087, 3);
poly(DARK, [1377, 1128], [1382, 1137], [1394, 1139], [1379, 1152]);
line(1378, 1130, 1379, 1152, 3);
document.getElementById("rack").innerHTML = out;
```
